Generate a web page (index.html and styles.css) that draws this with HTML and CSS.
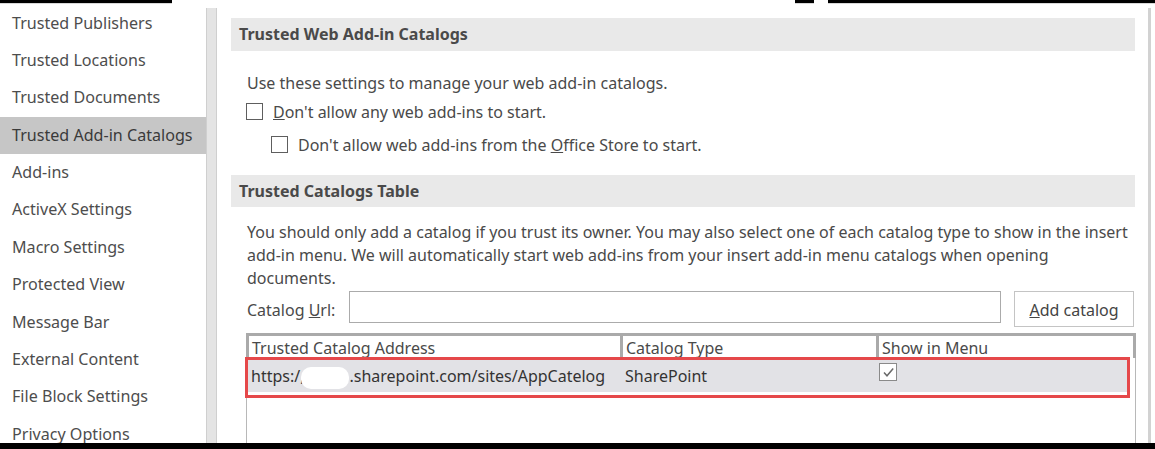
FILE: index.html
```html
<!DOCTYPE html>
<html>
<head>
<meta charset="utf-8">
<link rel="stylesheet" href="styles.css">
</head>
<body>
<div class="page">
  <div class="topstrip">
    <div class="seg seg-a"></div>
    <div class="gap gap-a"></div>
    <div class="seg seg-b"></div>
    <div class="gap gap-b"></div>
    <div class="seg seg-c"></div>
  </div>
  <div class="main">
    <nav class="sidebar">
      <div class="nav-item">Trusted Publishers</div>
      <div class="nav-item">Trusted Locations</div>
      <div class="nav-item">Trusted Documents</div>
      <div class="nav-item selected">Trusted Add-in Catalogs</div>
      <div class="nav-item">Add-ins</div>
      <div class="nav-item">ActiveX Settings</div>
      <div class="nav-item">Macro Settings</div>
      <div class="nav-item">Protected View</div>
      <div class="nav-item">Message Bar</div>
      <div class="nav-item">External Content</div>
      <div class="nav-item">File Block Settings</div>
      <div class="nav-item">Privacy Options</div>
    </nav>
    <div class="splitter"></div>
    <section class="content">
      <div class="section-head head-1">Trusted Web Add-in Catalogs</div>
      <p class="intro">Use these settings to manage your web add-in catalogs.</p>
      <div class="check-row">
        <span class="box"></span>
        <span><u>D</u>on't allow any web add-ins to start.</span>
      </div>
      <div class="check-row indent">
        <span class="box"></span>
        <span>Don't allow web add-ins from the <u>O</u>ffice Store to start.</span>
      </div>
      <div class="section-head head-2">Trusted Catalogs Table</div>
      <p class="desc">You should only add a catalog if you trust its owner. You may also select one of each catalog type to show in the insert add-in menu. We will automatically start web add-ins from your insert add-in menu catalogs when opening documents.</p>
      <div class="url-row">
        <span class="url-label">Catalog <u>U</u>rl:</span>
        <span class="url-input"></span>
        <span class="btn"><u>A</u>dd catalog</span>
      </div>
      <div class="table">
        <div class="thead">
          <div class="th c1">Trusted Catalog Address</div>
          <div class="th c2">Catalog Type</div>
          <div class="th c3">Show in Menu</div>
        </div>
        <div class="trow">
          <div class="td c1">https:/,<span class="redact"></span>.sharepoint.com/sites/AppCatelog</div>
          <div class="td c2">SharePoint</div>
          <div class="td c3">
            <span class="tick">
              <svg width="15" height="15" viewBox="0 0 15 15"><path d="M3 7.5 L6 10.8 L12.2 3.6" fill="none" stroke="#6a6a6a" stroke-width="1.5"/></svg>
            </span>
          </div>
          <div class="highlight"></div>
        </div>
      </div>
    </section>
    <div class="right-edge"></div>
  </div>
  <div class="bottombar"></div>
</div>
</body>
</html>
```

FILE: styles.css
```css
html, body {
  margin: 0;
  padding: 0;
  background: #ffffff;
}
body {
  font-family: "Segoe UI", "Noto Sans", "Open Sans", sans-serif;
  color: #4a4a4a;
  overflow: hidden;
}
.page {
  width: 1155px;
  height: 449px;
  display: flex;
  flex-direction: column;
}
.topstrip {
  height: 4px;
  display: flex;
  flex: none;
}
.seg {
  height: 3px;
  background: #000;
  border-bottom: 1px solid #d8d8d8;
}
.seg-a { width: 172px; }
.gap-a { width: 623px; }
.seg-b { width: 19px; }
.gap-b { width: 14px; }
.seg-c { flex: 1; }
.main {
  flex: 1;
  display: flex;
  min-height: 0;
  overflow: hidden;
}
.sidebar {
  width: 206px;
  flex: none;
  padding-top: 0.5px;
}
.nav-item {
  height: 37.4px;
  line-height: 37.4px;
  padding-left: 12px;
  font-size: 16.1px;
  color: #4d4d4d;
  white-space: nowrap;
}
.nav-item.selected {
  background: #c6c6c6;
  color: #3a3a3a;
}
.splitter {
  width: 9px;
  flex: none;
  margin-top: 4px;
  background: #e4e4e4;
  border-left: 1px solid #cfcfcf;
  border-right: 1px solid #cfcfcf;
}
.content {
  width: 904px;
  flex: none;
  margin-left: 14px;
  padding-top: 14px;
}
.section-head {
  height: 33px;
  line-height: 32px;
  background: #e9e9e9;
  padding-left: 8px;
  font-weight: bold;
  font-size: 16px;
  color: #4a4a4a;
}
.intro {
  margin: 21px 0 0 16px;
  font-size: 16px;
  line-height: 23px;
}
.check-row {
  display: flex;
  align-items: center;
  gap: 10px;
  margin-left: 15px;
  height: 33px;
  font-size: 16px;
}
.check-row.indent {
  margin-left: 40px;
}
.box {
  width: 15px;
  height: 15px;
  border: 1px solid #5e5e5e;
  background: #fff;
  flex: none;
}
.head-2 {
  margin-top: 14px;
  height: 32px;
}
.desc {
  margin: 14px 0 0 16px;
  font-size: 16px;
  line-height: 23px;
  width: 890px;
}
.url-row {
  display: flex;
  align-items: flex-start;
  margin: 1px 0 0 16px;
  height: 42px;
}
.url-label {
  font-size: 16px;
  line-height: 23px;
  margin-top: 8px;
  width: 102px;
}
.url-input {
  width: 650px;
  height: 30px;
  border: 1px solid #ababab;
}
.btn {
  margin-left: 13px;
  width: 120px;
  border: 1px solid #c4c4c4;
  box-sizing: border-box;
  text-align: center;
  line-height: 36px;
  font-size: 16px;
  color: #444;
  height: 36px;
}
.table {
  margin-left: 15px;
  width: 888px;
  height: 120px;
  border-left: 1px solid #b8b8b8;
  border-right: 1px solid #b8b8b8;
}
.thead {
  display: flex;
  border: 3px solid #aaaaaa;
  border-bottom: none;
  margin-left: -1px;
  margin-right: -1px;
  height: 22px;
  background: #aaaaaa;
  gap: 3px;
}
.th {
  background: #fff;
  font-size: 16px;
  line-height: 24px;
  padding-left: 3px;
  color: #4a4a4a;
  white-space: nowrap;
  overflow: hidden;
}
.c1 { width: 368px; flex: none; }
.c2 { width: 250px; flex: none; }
.c3 { flex: 1; }
.trow {
  position: relative;
  display: flex;
  margin-top: 2px;
  height: 32px;
  background: #e2e2e6;
  gap: 3px;
  margin-right: 5px;
}
.td {
  font-size: 16px;
  line-height: 32px;
  padding-left: 4px;
  color: #333;
  white-space: nowrap;
}
.td.c1 { width: 367px; }
.redact {
  display: inline-block;
  width: 48px;
  height: 22px;
  background: #fff;
  border-radius: 10px;
  vertical-align: middle;
  margin-left: -3px;
}
.tick {
  display: inline-flex;
  align-items: center;
  justify-content: center;
  width: 16px;
  height: 16px;
  border: 1px solid #8a8a8a;
  background: #fff;
  margin-top: 3px;
  margin-left: -3px;
}
.td.c3 {
  display: flex;
  align-items: flex-start;
}
.highlight {
  position: absolute;
  left: -2px;
  top: -3px;
  right: 0;
  bottom: -6px;
  border: 3px solid #e5484a;
  box-sizing: border-box;
  pointer-events: none;
}
.right-edge {
  width: 3px;
  flex: none;
  margin-left: 13px;
  margin-top: 4px;
  background: #d2d2d2;
}
.bottombar {
  height: 6px;
  flex: none;
  background: #000;
}
```
